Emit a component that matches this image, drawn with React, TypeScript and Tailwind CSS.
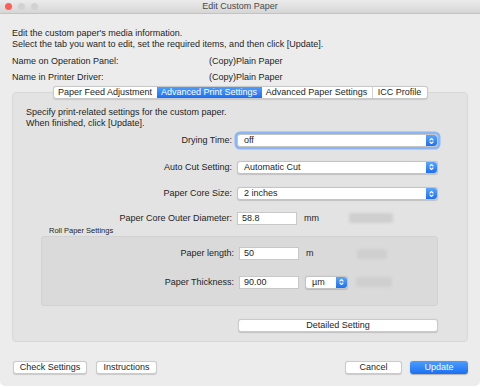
const font = { fontFamily: '"Liberation Sans", Arial, sans-serif' };

function Arrows() {
  return (
    <div className="flex h-full w-[11px] items-center justify-center rounded-r-[3px] bg-gradient-to-b from-[#5aa6fd] to-[#1d6ff1]">
      <svg width="5" height="8" viewBox="0 0 5 8" fill="none" stroke="white" strokeWidth="1.1" strokeLinecap="round" strokeLinejoin="round">
        <path d="M1 3 L2.5 1.5 L4 3" />
        <path d="M1 5 L2.5 6.5 L4 5" />
      </svg>
    </div>
  );
}

function Select({ value, width, focus }: { value: string; width: string; focus?: boolean }) {
  return (
    <div
      className={`flex h-[13px] items-center justify-between rounded-[3px] border border-[#c4c4c4] bg-white shadow-[0_0.5px_1px_rgba(0,0,0,0.15)] ${width} ${
        focus ? 'ring-[2.5px] ring-[#8ab6f5]' : ''
      }`}
    >
      <span className="pl-[6px] leading-none">{value}</span>
      <Arrows />
    </div>
  );
}

function Input({ value }: { value: string }) {
  return (
    <div className="flex h-[13px] w-[60px] items-center border border-[#c8c8c8] bg-white pl-[4px] leading-none">
      {value}
    </div>
  );
}

function Blur({ w, ml }: { w: string; ml: string }) {
  return <div className={`h-[10px] rounded-[3px] bg-[#cfcfcf] blur-[1.5px] ${w} ${ml}`} />;
}

function Btn({ label, w, primary }: { label: string; w: string; primary?: boolean }) {
  return (
    <div
      className={`flex h-[13px] items-center justify-center rounded-[3px] leading-none ${w} ${
        primary
          ? 'bg-gradient-to-b from-[#4c9dfc] to-[#1a6ff3] text-white shadow-[0_0.5px_1px_rgba(0,0,0,0.25)]'
          : 'border border-[#cbcbcb] bg-white shadow-[0_0.5px_1px_rgba(0,0,0,0.15)]'
      }`}
    >
      {label}
    </div>
  );
}

export default function App() {
  const tabs = [
    { label: 'Paper Feed Adjustment', w: 'w-[103px]' },
    { label: 'Advanced Print Settings', w: 'w-[105px]', active: true },
    { label: 'Advanced Paper Settings', w: 'w-[110px]' },
    { label: 'ICC Profile', w: 'w-[55px]' },
  ];

  return (
    <div className="h-[387px] w-[480px] bg-white text-[9px] text-[#1e1e1e]" style={font}>
      <div className="h-[386px] overflow-hidden rounded-b-[5px] bg-[#ececec]">
        {/* title bar */}
        <div className="relative flex h-[14px] items-center justify-center border-b border-[#c3c3c3] bg-gradient-to-b from-[#ebebeb] to-[#d6d6d6]">
          <div className="absolute left-[5px] top-[3px] flex gap-[6px]">
            <div className="h-[7px] w-[7px] rounded-full bg-[#fc5f57]" />
            <div className="h-[7px] w-[7px] rounded-full bg-[#d2d2d2]" />
            <div className="h-[7px] w-[7px] rounded-full bg-[#d2d2d2]" />
          </div>
          <span className="text-[9px] text-[#4a4a4a]">Edit Custom Paper</span>
        </div>

        <div className="px-[12px]">
          <div className="mt-[14px] leading-[10.5px]">
            <div>Edit the custom paper's media information.</div>
            <div>Select the tab you want to edit, set the required items, and then click [Update].</div>
          </div>
          <div className="mt-[7px] flex h-[11px] items-center">
            <div className="w-[197px]">Name on Operation Panel:</div>
            <div>(Copy)Plain Paper</div>
          </div>
          <div className="mt-[5px] flex h-[11px] items-center">
            <div className="w-[197px]">Name in Printer Driver:</div>
            <div>(Copy)Plain Paper</div>
          </div>

          {/* tabs */}
          <div className="relative z-10 mt-[3px] flex justify-center">
            <div className="flex h-[13px] rounded-[3px] border border-[#c9c9c9] bg-white shadow-[0_0.5px_1px_rgba(0,0,0,0.12)]">
              {tabs.map((t, i) => (
                <div
                  key={t.label}
                  className={`flex items-center justify-center leading-none ${t.w} ${
                    t.active
                      ? 'bg-gradient-to-b from-[#4c9dfc] to-[#1a6ff3] text-white'
                      : i > 0 && !tabs[i - 1].active
                      ? 'border-l border-[#d4d4d4]'
                      : ''
                  }`}
                >
                  {t.label}
                </div>
              ))}
            </div>
          </div>

          {/* panel */}
          <div className="-mt-[7px] h-[250px] rounded-[4px] border border-[#d8d8d8] bg-[#e3e3e3]">
            <div className="pl-[13px] pt-[14px] leading-[10.5px]">
              <div>Specify print-related settings for the custom paper.</div>
              <div>When finished, click [Update].</div>
            </div>

            <div className="mt-[6px] flex items-center">
              <div className="w-[224px] pr-[5px] text-right">Drying Time:</div>
              <Select value="off" width="w-[201px]" focus />
            </div>
            <div className="mt-[13px] flex items-center">
              <div className="w-[224px] pr-[5px] text-right">Auto Cut Setting:</div>
              <Select value="Automatic Cut" width="w-[201px]" />
            </div>
            <div className="mt-[13px] flex items-center">
              <div className="w-[224px] pr-[5px] text-right">Paper Core Size:</div>
              <Select value="2 inches" width="w-[201px]" />
            </div>
            <div className="mt-[11px] flex items-center">
              <div className="w-[224px] pr-[5px] text-right">Paper Core Outer Diameter:</div>
              <Input value="58.8" />
              <div className="ml-[7px]">mm</div>
              <Blur w="w-[44px]" ml="ml-[30px]" />
            </div>

            <div className="ml-[36px] mt-[1px] h-[10px] text-[7.5px] leading-[10px]">Roll Paper Settings</div>
            <div className="ml-[28px] h-[70px] w-[397px] rounded-[3px] border border-[#d2d2d2] bg-[#dadada] pt-[10px]">
              <div className="flex items-center">
                <div className="w-[197px] pr-[5px] text-right">Paper length:</div>
                <Input value="50" />
                <div className="ml-[7px]">m</div>
                <Blur w="w-[30px]" ml="ml-[43px]" />
              </div>
              <div className="mt-[15px] flex items-center">
                <div className="w-[197px] pr-[5px] text-right">Paper Thickness:</div>
                <Input value="90.00" />
                <div className="ml-[6px]">
                  <Select value="µm" width="w-[43px]" />
                </div>
                <Blur w="w-[36px]" ml="ml-[8px]" />
              </div>
            </div>

            <div className="ml-[225px] mt-[13px]">
              <Btn label="Detailed Setting" w="w-[200px]" />
            </div>
          </div>

          {/* bottom buttons */}
          <div className="mt-[19px] flex items-center">
            <div className="ml-[1px]">
              <Btn label="Check Settings" w="w-[74px]" />
            </div>
            <div className="ml-[9px]">
              <Btn label="Instructions" w="w-[61px]" />
            </div>
            <div className="ml-auto">
              <Btn label="Cancel" w="w-[57px]" />
            </div>
            <div className="ml-[8px]">
              <Btn label="Update" w="w-[58px]" primary />
            </div>
          </div>
        </div>
      </div>
    </div>
  );
}
